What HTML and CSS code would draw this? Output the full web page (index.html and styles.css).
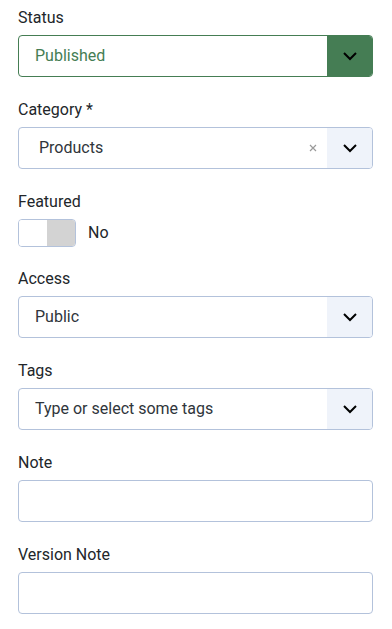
FILE: index.html
```html
<!DOCTYPE html>
<html lang="en">
<head>
<meta charset="utf-8">
<title>Options</title>
<link rel="stylesheet" href="styles.css">
</head>
<body>
<form class="form">
  <div class="field">
    <label class="label">Status</label>
    <div class="select select-green">
      <span class="value value-green">Published</span>
      <span class="btn btn-green">
        <svg class="chev" viewBox="0 0 16 16" width="16" height="16"><path d="M2 5l6 6 6-6" fill="none" stroke="#000" stroke-width="2"/></svg>
      </span>
    </div>
  </div>

  <div class="field">
    <label class="label">Category *</label>
    <div class="select">
      <span class="value value-choice">Products</span>
      <svg class="clear" viewBox="0 0 8 8" width="8" height="8"><path d="M1 1l6 6M7 1L1 7" stroke="#9a9a9a" stroke-width="1.2" fill="none"/></svg>
      <span class="btn">
        <svg class="chev" viewBox="0 0 16 16" width="16" height="16"><path d="M2 5l6 6 6-6" fill="none" stroke="#000" stroke-width="2"/></svg>
      </span>
    </div>
  </div>

  <div class="field field-toggle">
    <label class="label">Featured</label>
    <div class="toggle-row">
      <span class="toggle"><span class="toggle-on"></span><span class="toggle-off"></span></span>
      <span class="toggle-text">No</span>
    </div>
  </div>

  <div class="field">
    <label class="label">Access</label>
    <div class="select">
      <span class="value">Public</span>
      <span class="btn">
        <svg class="chev" viewBox="0 0 16 16" width="16" height="16"><path d="M2 5l6 6 6-6" fill="none" stroke="#000" stroke-width="2"/></svg>
      </span>
    </div>
  </div>

  <div class="field">
    <label class="label">Tags</label>
    <div class="select">
      <span class="value">Type or select some tags</span>
      <span class="btn">
        <svg class="chev" viewBox="0 0 16 16" width="16" height="16"><path d="M2 5l6 6 6-6" fill="none" stroke="#000" stroke-width="2"/></svg>
      </span>
    </div>
  </div>

  <div class="field">
    <label class="label">Note</label>
    <div class="input"></div>
  </div>

  <div class="field">
    <label class="label">Version Note</label>
    <div class="input"></div>
  </div>
</form>
</body>
</html>
```

FILE: styles.css
```css
* { box-sizing: border-box; }
html, body { margin: 0; padding: 0; background: #fff; }
body {
  font-family: Roboto, "Liberation Sans", Arial, sans-serif;
  font-size: 16px;
  line-height: 24px;
  color: #22262a;
}
.form {
  width: 355px;
  margin-left: 18px;
  padding-top: 6px;
}
.field {
  display: flex;
  flex-direction: column;
  margin-bottom: 21px;
}
.field-toggle { margin-bottom: 20px; }
.label {
  display: block;
  margin-bottom: 5px;
  color: #22262a;
}
.select, .input {
  height: 42px;
  border: 1px solid #b3c2db;
  border-radius: 4px;
  display: flex;
  align-items: center;
  background: #fff;
  overflow: hidden;
}
.select-green { border-color: #457d54; }
.value {
  flex: 1;
  padding-left: 16px;
  color: #2f353b;
}
.value-green { color: #457d54; }
.value-choice { padding-left: 20px; }
.clear { margin-right: 10px; }
.btn {
  width: 45px;
  height: 100%;
  background: #eff3fa;
  display: flex;
  align-items: center;
  justify-content: center;
}
.btn-green { background: #457d54; }
.chev { display: block; }
.toggle-row {
  display: flex;
  align-items: center;
  height: 28px;
}
.toggle {
  width: 58px;
  height: 28px;
  border: 1px solid #b3c2db;
  border-radius: 4px;
  display: flex;
  overflow: hidden;
}
.toggle-on { flex: 1; background: #fff; }
.toggle-off { width: 28px; background: #d3d3d3; }
.toggle-text { margin-left: 12px; color: #22262a; }
```
